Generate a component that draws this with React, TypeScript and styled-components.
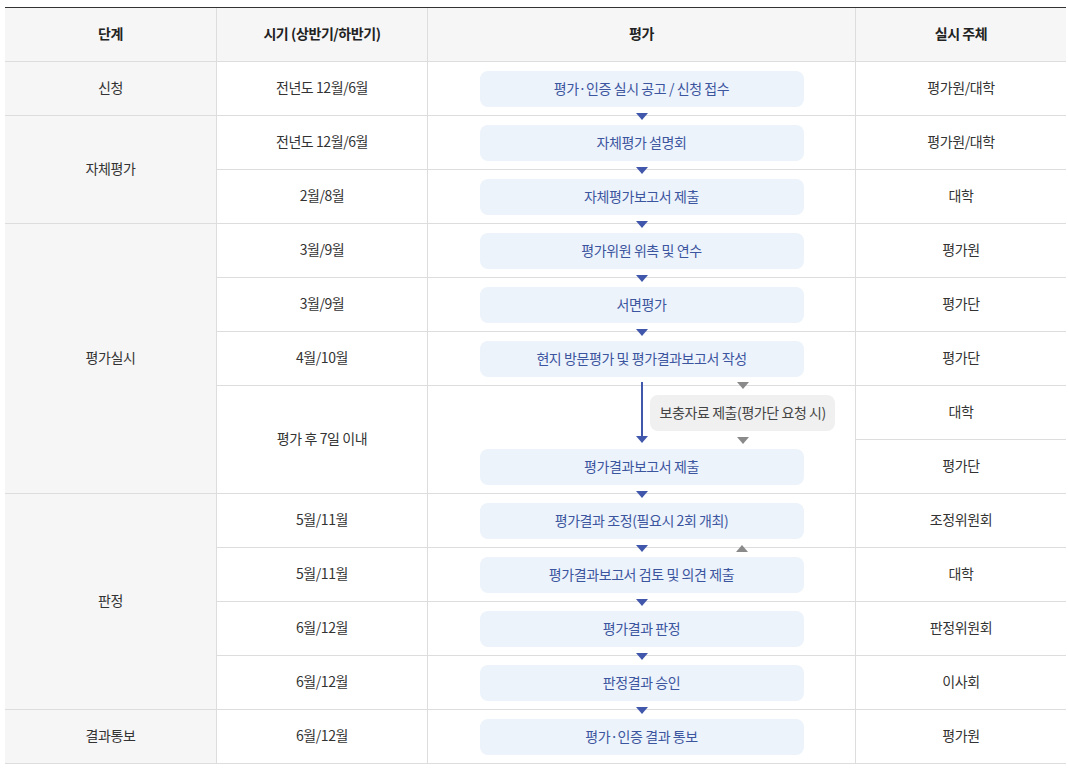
import React from "react";
import styled, { createGlobalStyle, css } from "styled-components";

const GlobalStyle = createGlobalStyle`
  html, body { margin: 0; padding: 0; background: #ffffff; }
  body {
    font-family: "Noto Sans CJK KR", "Noto Sans", sans-serif;
    color: #333333;
  }
  * { box-sizing: border-box; }
`;

const Page = styled.div`
  padding: 7px 0 0 5px;
`;

const Table = styled.div`
  width: 1061px;
  display: grid;
  grid-template-columns: 212px 211px 428px 210px;
  grid-auto-rows: 54px;
  border-top: 1px solid #333333;
`;

type CellProps = {
  $col: number;
  $row: number;
  $span?: number;
  $head?: boolean;
  $shaded?: boolean;
  $last?: boolean;
};

const Cell = styled.div<CellProps>`
  grid-column: ${(p) => p.$col};
  grid-row: ${(p) => `${p.$row} / span ${p.$span ?? 1}`};
  position: relative;
  display: flex;
  align-items: center;
  justify-content: center;
  padding-bottom: 3px;
  border-bottom: 1px solid #dddddd;
  border-right: ${(p) => (p.$last ? "none" : "1px solid #dddddd")};
  background: ${(p) => (p.$head || p.$shaded ? "#f6f6f6" : "#ffffff")};
  font-size: 14px;
  letter-spacing: -0.03em;
  color: ${(p) => (p.$head ? "#222222" : "#333333")};
  font-weight: ${(p) => (p.$head ? 700 : 400)};
`;

const FlowCell = styled.div<{ $row: number; $span?: number }>`
  grid-column: 3;
  grid-row: ${(p) => `${p.$row} / span ${p.$span ?? 1}`};
  position: relative;
  display: flex;
  flex-direction: column;
  align-items: center;
  padding-top: ${(p) => ((p.$span ?? 1) > 1 ? "0" : "9px")};
  border-bottom: 1px solid #dddddd;
  border-right: 1px solid #dddddd;
  background: #ffffff;
`;

const StepBox = styled.div`
  width: 324px;
  height: 36px;
  padding-bottom: 2px;
  border-radius: 8px;
  background: #ecf3fb;
  color: #3c559f;
  font-size: 14px;
  letter-spacing: -0.03em;
  display: flex;
  align-items: center;
  justify-content: center;
`;

const SideBox = styled.div`
  width: 185px;
  height: 36px;
  padding-bottom: 2px;
  border-radius: 8px;
  background: #f0f0f0;
  color: #444444;
  font-size: 14px;
  letter-spacing: -0.03em;
  display: flex;
  align-items: center;
  justify-content: center;
`;

const triangle = (color: string, up?: boolean) => css`
  width: 0;
  height: 0;
  border-left: 6.5px solid transparent;
  border-right: 6.5px solid transparent;
  ${up
    ? `border-bottom: 7px solid ${color};`
    : `border-top: 7px solid ${color};`}
`;

const DownArrow = styled.span`
  position: absolute;
  z-index: 2;
  bottom: -5px;
  left: 50%;
  transform: translateX(-50%);
  ${triangle("#4157ab")}
`;

const BackArrow = styled.span<{ $offset: number }>`
  position: absolute;
  z-index: 2;
  bottom: -5px;
  left: ${(p) => `calc(50% + ${p.$offset}px)`};
  transform: translateX(-50%);
  ${triangle("#8a8a8a", true)}
`;

const Branch = styled.div`
  width: 100%;
  height: 67px;
  margin-top: -4px;
  display: grid;
  grid-template-columns: 1fr 14px 1fr;
  position: relative;
  z-index: 1;
`;

const MainLine = styled.div`
  grid-column: 2;
  display: flex;
  flex-direction: column;
  align-items: center;
`;

const LineStem = styled.span`
  width: 2px;
  height: 54px;
  background: #4157ab;
`;

const LineHead = styled.span`
  ${triangle("#4157ab")}
`;

const SideFlow = styled.div`
  grid-column: 3;
  padding-right: 18px;
  display: flex;
  flex-direction: column;
  align-items: center;
  gap: 6px;
`;

const GrayHead = styled.span`
  ${triangle("#8a8a8a")}
`;

type Step = {
  period: string;
  step: string;
  arrow: boolean;
  span?: number;
  branch?: string;
  back?: boolean;
};

const stages = [
  { name: "신청", span: 1 },
  { name: "자체평가", span: 2 },
  { name: "평가실시", span: 5 },
  { name: "판정", span: 4 },
  { name: "결과통보", span: 1 },
];

const steps: Step[] = [
  { period: "전년도 12월/6월", step: "평가·인증 실시 공고 / 신청 접수", arrow: true },
  { period: "전년도 12월/6월", step: "자체평가 설명회", arrow: true },
  { period: "2월/8월", step: "자체평가보고서 제출", arrow: true },
  { period: "3월/9월", step: "평가위원 위촉 및 연수", arrow: true },
  { period: "3월/9월", step: "서면평가", arrow: true },
  { period: "4월/10월", step: "현지 방문평가 및 평가결과보고서 작성", arrow: false },
  {
    period: "평가 후 7일 이내",
    step: "평가결과보고서 제출",
    arrow: true,
    span: 2,
    branch: "보충자료 제출(평가단 요청 시)",
  },
  { period: "5월/11월", step: "평가결과 조정(필요시 2회 개최)", arrow: true, back: true },
  { period: "5월/11월", step: "평가결과보고서 검토 및 의견 제출", arrow: true },
  { period: "6월/12월", step: "평가결과 판정", arrow: true },
  { period: "6월/12월", step: "판정결과 승인", arrow: true },
  { period: "6월/12월", step: "평가·인증 결과 통보", arrow: false },
];

const actors = [
  "평가원/대학",
  "평가원/대학",
  "대학",
  "평가원",
  "평가단",
  "평가단",
  "대학",
  "평가단",
  "조정위원회",
  "대학",
  "판정위원회",
  "이사회",
  "평가원",
];

export default function App() {
  let stageRow = 2;
  let stepRow = 2;
  return (
    <>
      <GlobalStyle />
      <Page>
        <Table>
          <Cell $col={1} $row={1} $head>단계</Cell>
          <Cell $col={2} $row={1} $head>시기 (상반기/하반기)</Cell>
          <Cell $col={3} $row={1} $head>평가</Cell>
          <Cell $col={4} $row={1} $head $last>실시 주체</Cell>

          {stages.map((s) => {
            const row = stageRow;
            stageRow += s.span;
            return (
              <Cell key={s.name} $col={1} $row={row} $span={s.span} $shaded>
                {s.name}
              </Cell>
            );
          })}

          {steps.map((s, i) => {
            const row = stepRow;
            const span = s.span ?? 1;
            stepRow += span;
            return (
              <React.Fragment key={i}>
                <Cell $col={2} $row={row} $span={span}>
                  {s.period}
                </Cell>
                <FlowCell $row={row} $span={span}>
                  {s.branch && (
                    <Branch>
                      <MainLine>
                        <LineStem />
                        <LineHead />
                      </MainLine>
                      <SideFlow>
                        <GrayHead />
                        <SideBox>{s.branch}</SideBox>
                        <GrayHead />
                      </SideFlow>
                    </Branch>
                  )}
                  <StepBox>{s.step}</StepBox>
                  {s.arrow && <DownArrow />}
                  {s.back && <BackArrow $offset={100} />}
                </FlowCell>
              </React.Fragment>
            );
          })}

          {actors.map((a, i) => (
            <Cell key={i} $col={4} $row={i + 2} $last>
              {a}
            </Cell>
          ))}
        </Table>
      </Page>
    </>
  );
}
